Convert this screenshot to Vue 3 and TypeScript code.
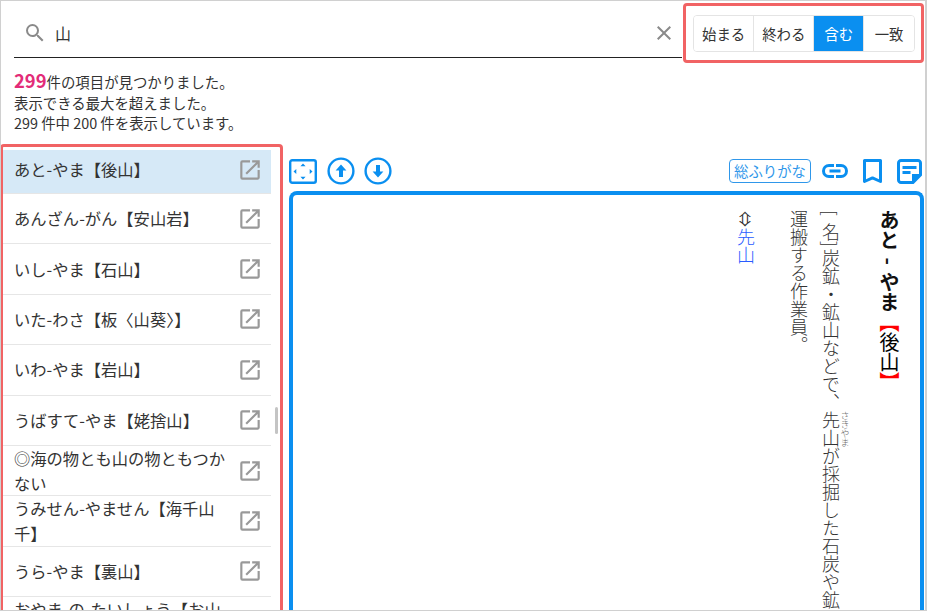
<script setup lang="ts">
const items: string[] = [
  'あと-やま【後山】',
  'あんざん-がん【安山岩】',
  'いし-やま【石山】',
  'いた-わさ【板〈山葵〉】',
  'いわ-やま【岩山】',
  'うばすて-やま【姥捨山】',
  '◎海の物とも山の物ともつかない',
  'うみせん-やません【海千山千】',
  'うら-やま【裏山】',
  'おやま-の-たいしょう【お山の大将】',
]
const modes: string[] = ['始まる', '終わる', '含む', '一致']
</script>

<template>
  <div class="app">
    <header class="top">
      <div class="search">
        <svg class="search-icon" viewBox="0 0 24 24" width="24" height="24"><path d="M15.500 14h-.79l-.28-.27A6.470 6.470 0 0 0 16 9.500 6.500 6.500 0 1 0 9.500 16c1.610 0 3.090-.59 4.230-1.570l.27.28v.79l5 4.990L20.490 19l-4.990-5zm-6 0C7.010 14 5 11.990 5 9.500S7.010 5 9.500 5 14 7.010 14 9.500 11.990 14 9.500 14z"/></svg>
        <span class="query">山</span>
        <svg class="clear-icon" viewBox="0 0 24 24" width="24" height="24"><path d="M19 6.410 17.590 5 12 10.590 6.410 5 5 6.410 10.590 12 5 17.590 6.410 19 12 13.410 17.590 19 19 17.590 13.410 12z"/></svg>
      </div>
      <div class="modes-frame">
        <div class="modes">
          <button v-for="m in modes" :key="m" class="mode" :class="{ active: m === '含む' }">{{ m }}</button>
        </div>
      </div>
    </header>

    <section class="status">
      <div><strong>299</strong>件の項目が見つかりました。</div>
      <div>表示できる最大を超えました。</div>
      <div>299 件中 200 件を表示しています。</div>
    </section>

    <main class="main">
      <aside class="list-frame">
        <ul class="list">
          <li v-for="(item, i) in items" :key="item" class="row" :class="{ selected: i === 0 }">
            <span class="row-text">{{ item }}</span>
            <svg class="open-icon" viewBox="0 0 24 24" width="26" height="26"><path d="M19 19H5V5h7V3H5a2 2 0 0 0-2 2v14a2 2 0 0 0 2 2h14c1.100 0 2-.9 2-2v-7h-2v7zM14 3v2h3.590l-9.830 9.830 1.410 1.410L19 6.410V10h2V3h-7z"/></svg>
          </li>
        </ul>
        <div class="thumb"></div>
      </aside>

      <div class="detail">
        <div class="toolbar">
          <svg class="fit" viewBox="0 0 28 25" width="28" height="25">
            <rect x="1.200" y="1.200" width="25.600" height="22.600" rx="2" fill="none" stroke="#0a8ff0" stroke-width="2.400"/>
            <path d="M14 4.500l2.600 2.800h-5.200zM14 20.500l2.600-2.800h-5.200zM4.500 12.500l2.800-2.600v5.200zM23.500 12.500l-2.800-2.600v5.200z" fill="#0a8ff0"/>
          </svg>
          <svg class="round first" viewBox="0 0 28 28" width="28" height="28">
            <circle cx="14" cy="14" r="12.400" fill="none" stroke="#0a8ff0" stroke-width="2.400"/>
            <path d="M14 7.600l5.400 6h-3.400V20h-4v-6.400H8.600z" fill="#0a8ff0"/>
          </svg>
          <svg class="round" viewBox="0 0 28 28" width="28" height="28">
            <circle cx="14" cy="14" r="12.400" fill="none" stroke="#0a8ff0" stroke-width="2.400"/>
            <path d="M14 20.400l-5.400-6H12V8h4v6.400h3.400z" fill="#0a8ff0"/>
          </svg>
          <span class="spacer"></span>
          <span class="furigana">総ふりがな</span>
          <svg class="link" viewBox="0 0 26 14" width="26" height="14"><path d="M7 0h5v3H7a4 4 0 0 0 0 8h5v3H7a7 7 0 0 1 0-14zm7 0h5a7 7 0 0 1 0 14h-5v-3h5a4 4 0 0 0 0-8h-5zM7.500 5.500h11v3h-11z" fill="#0a8ff0"/></svg>
          <svg class="bookmark" viewBox="0 0 19 25" width="19" height="25"><path d="M1.500 1.500h16v21l-8-3.600-8 3.600z" fill="none" stroke="#0a8ff0" stroke-width="3" stroke-linejoin="round"/></svg>
          <svg class="note" viewBox="0 0 25 25" width="25" height="25"><path d="M1.500 4a2.500 2.500 0 0 1 2.500-2.500h17a2.500 2.500 0 0 1 2.500 2.500v12l-7.500 7.500H4a2.500 2.500 0 0 1-2.500-2.500z" fill="none" stroke="#0a8ff0" stroke-width="3"/><path d="M5.500 7h14v3h-14zM5.500 12h8v3h-8zM15 24v-9h9z" fill="#0a8ff0"/></svg>
        </div>
        <article class="entry">
          <div class="vertical">
            <h2 class="head">あと - やま<span class="br">【</span><span class="kanji">後山</span><span class="br">】</span></h2>
            <p class="body"><span class="lb open">[</span>名<span class="lb close">]</span>炭鉱・鉱山などで、<ruby>先山<rt>さきやま</rt></ruby>が採掘した石炭や鉱石を<br>運搬する作業員。</p>
            <p class="ref"><span class="arrow">⇔</span><span class="reflink">先山</span></p>
          </div>
        </article>
      </div>
    </main>
  </div>
</template>

<style>
html, body { margin: 0; background: #fff; }
</style>

<style scoped>
.app {
  width: 927px;
  height: 611px;
  box-sizing: border-box;
  border: 1px solid #d0d0d0;
  border-right-width: 2px;
  overflow: hidden;
  display: flex;
  flex-direction: column;
  font-family: "Noto Sans CJK JP", "Noto Sans", sans-serif;
  color: #333;
}
.top {
  display: flex;
  align-items: flex-start;
  height: 64px;
  flex: none;
  padding: 2px 0 0 13px;
  box-sizing: border-box;
}
.search {
  width: 668px;
  height: 55px;
  box-sizing: border-box;
  border-bottom: 1px solid #222;
  display: flex;
  align-items: center;
  padding: 6px 6px 0 9px;
}
.search-icon, .clear-icon { fill: #8a8a8a; flex: none; }
.query { flex: 1; margin-left: 8px; font-size: 16px; }
.modes-frame {
  margin-left: 1px;
  width: 241px;
  height: 60px;
  box-sizing: border-box;
  border: 3px solid #f16364;
  border-radius: 4px;
  padding-left: 1px;
  display: flex;
  align-items: center;
  justify-content: center;
}
.modes {
  display: flex;
  height: 37px;
  border: 1px solid #e4e4e4;
  border-radius: 4px;
  overflow: hidden;
  box-sizing: border-box;
}
.mode {
  font: inherit;
  font-size: 14.400px;
  color: #333;
  background: #fff;
  border: none;
  border-right: 1px solid #e4e4e4;
  padding: 0 8px;
  margin: 0;
}
.mode:last-child { border-right: none; padding: 0 10.500px; }
.mode.active { background: #0a8ff0; color: #fff; padding: 0 10px; }
.status {
  flex: none;
  height: 79px;
  padding: 5px 0 0 13px;
  box-sizing: border-box;
  font-size: 14.400px;
  line-height: 20.500px;
  color: #333;
}
.status strong { font-size: 18.400px; color: #e32c78; font-weight: 700; line-height: 20.500px; }
.main { flex: 1; min-height: 0; display: flex; }
.list-frame {
  position: relative;
  width: 283px;
  margin-left: -1px;
  box-sizing: border-box;
  border: 3px solid #f16364;
  border-bottom: none;
  border-radius: 4px 4px 0 0;
  padding-top: 3px;
  overflow: hidden;
  flex: none;
}
.list { list-style: none; margin: 0; padding: 0; width: 268px; }
.row {
  height: 50.400px;
  box-sizing: border-box;
  display: flex;
  align-items: center;
  padding: 0 8px 0 12px;
  border-bottom: 1px solid #e6e6e6;
  font-size: 16.300px;
  line-height: 25px;
  color: #333;
}
.row.selected { background: #d6e9f7; height: 44px; padding-bottom: 4px; }
.row-text { flex: 1; overflow: hidden; max-height: 50px; margin-left: -1px; }
.open-icon { fill: #999; flex: none; margin-left: 8px; }
.thumb {
  position: absolute;
  left: 272px;
  top: 260px;
  width: 3px;
  height: 27px;
  background: #c4c4c4;
  border-radius: 2px;
}
.detail { flex: 1; min-width: 0; display: flex; flex-direction: column; padding: 0 1px 0 6px; }
.toolbar {
  height: 47px;
  flex: none;
  display: flex;
  align-items: center;
  box-sizing: border-box;
  padding: 7px 2px 0 0;
}
.round { margin-left: 9px; }
.round.first { margin-left: 10px; }
.spacer { flex: 1; }
.furigana {
  font-size: 14.400px;
  line-height: 22px;
  height: 24px;
  box-sizing: border-box;
  color: #2f97ea;
  border: 1px solid #2f97ea;
  border-radius: 4px;
  padding: 0 4px;
}
.link { margin-left: 11px; }
.bookmark { margin-left: 15px; }
.note { margin-left: 15px; }
.entry {
  flex: 1;
  min-height: 0;
  border: 4px solid #0a8ff0;
  border-bottom: none;
  border-radius: 8px 8px 0 0;
  overflow: hidden;
  display: flex;
  justify-content: flex-end;
  align-items: flex-start;
}
.vertical {
  writing-mode: vertical-rl;
  flex: none;
  padding: 15px 15px 0 0;
  color: #222;
  white-space: nowrap;
}
.head {
  margin: 0 0 0 23px;
  font-size: 20px;
  line-height: 32px;
  font-weight: 700;
  color: #111;
  word-spacing: 3px;
}
.kanji { font-weight: 400; color: #000; }
.br { color: #f00; font-feature-settings: "palt"; }
.body {
  margin: 0;
  font-size: 18px;
  line-height: 32px;
  font-weight: 300;
  color: #333;
}
.lb { display: inline-block; line-height: 32px; }
.lb.open { height: 13px; }
.lb.close { height: 8px; }
.body ruby rt { font-size: 9px; line-height: 1; color: #666; }
.ref { margin: 0 21px 0 0; font-size: 18px; line-height: 32px; }
.arrow { color: #333; display: inline-block; height: 18px; text-align: center; font-size: 16px; line-height: 32px; }
.reflink { color: #2a5cff; font-weight: 300; }
</style>
